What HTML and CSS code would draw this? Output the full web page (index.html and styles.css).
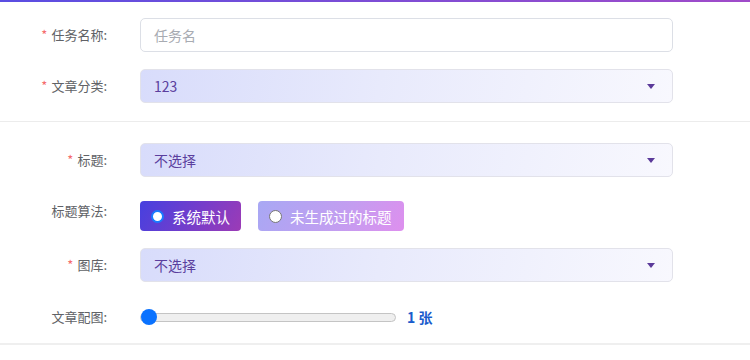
FILE: index.html
```html
<!DOCTYPE html>
<html lang="zh">
<head>
<meta charset="utf-8">
<link rel="stylesheet" href="styles.css">
</head>
<body>
<div class="topbar"></div>
<form class="form">
  <div class="section first">
    <div class="row">
      <label class="label"><span class="req">*</span>任务名称:</label>
      <div class="input"><span class="placeholder">任务名</span></div>
    </div>
    <div class="row">
      <label class="label"><span class="req">*</span>文章分类:</label>
      <div class="select"><span>123</span><i class="caret"></i></div>
    </div>
  </div>
  <div class="section second">
    <div class="row">
      <label class="label"><span class="req">*</span>标题:</label>
      <div class="select"><span>不选择</span><i class="caret"></i></div>
    </div>
    <div class="row row-radio">
      <label class="label top">标题算法:</label>
      <div class="radios">
        <div class="radio on"><span class="dot"></span>系统默认</div>
        <div class="radio off"><span class="dot"></span>未生成过的标题</div>
      </div>
    </div>
    <div class="row">
      <label class="label"><span class="req">*</span>图库:</label>
      <div class="select"><span>不选择</span><i class="caret"></i></div>
    </div>
    <div class="row row-slider">
      <label class="label">文章配图:</label>
      <div class="slider-wrap">
        <div class="track"><span class="thumb"></span></div>
        <span class="count">1 张</span>
      </div>
    </div>
  </div>
</form>
</body>
</html>
```
FILE: styles.css
```css
html, body {
  margin: 0;
  padding: 0;
  background: #fff;
  font-family: "Noto Sans CJK SC", "Noto Sans", sans-serif;
}
.topbar {
  height: 2px;
  background: linear-gradient(90deg, #5a4ee2, #a04bc9);
}
.form {
  margin: 0;
}
.section.first {
  padding-top: 16px;
  padding-bottom: 18px;
  border-bottom: 1px solid #ececec;
}
.section.second {
  padding-top: 21px;
  padding-bottom: 11px;
  border-bottom: 2px solid #efefef;
}
.row {
  display: flex;
  align-items: center;
  gap: 33px;
  margin-bottom: 17px;
}
.section.first .row:last-child { margin-bottom: 0; }
.row-radio { align-items: flex-start; margin-top: 24px; margin-bottom: 17px; }
.row-slider { margin-top: 20px; margin-bottom: 0; height: 30px; }
.label {
  width: 107px;
  flex: none;
  text-align: right;
  font-size: 13px;
  color: #606266;
  line-height: 20px;
}
.label.top { margin-top: 0; }
.req {
  color: #f56c6c;
  margin-right: 4px;
}
.input, .select {
  width: 533px;
  height: 34px;
  box-sizing: border-box;
  border: 1px solid #dcdfe6;
  border-radius: 5px;
  display: flex;
  align-items: center;
  padding: 0 14px 0 13px;
  font-size: 14px;
}
.input { background: #fff; }
.placeholder { color: #a8abb2; }
.select {
  background: linear-gradient(100deg, #d8dcfb 0%, #e8eafc 45%, #f8f8fe 100%);
  border-color: #e2e2ea;
  color: #5b3f9e;
  justify-content: space-between;
}
.caret {
  width: 0;
  height: 0;
  border-left: 4px solid transparent;
  border-right: 4px solid transparent;
  border-top: 5px solid #5b3a9a;
  margin-right: 3px;
}
.radios {
  display: flex;
  gap: 17px;
}
.radio {
  height: 30px;
  box-sizing: border-box;
  border-radius: 4px;
  display: flex;
  align-items: center;
  padding: 0 0 0 11px;
  font-size: 14.5px;
  color: #fff;
  white-space: nowrap;
  overflow: hidden;
}
.radio.on {
  width: 101px;
  background: linear-gradient(120deg, #4640df 0%, #7a3dc8 60%, #9c3bb6 100%);
}
.radio.off {
  width: 146px;
  background: linear-gradient(120deg, #a8a8f4 0%, #c49df0 60%, #de8fee 100%);
}
.dot {
  width: 13px;
  height: 13px;
  box-sizing: border-box;
  border-radius: 50%;
  background: #fff;
  margin-right: 8px;
  flex: none;
}
.radio.on .dot { border: 2px solid #1a7bff; }
.radio.off .dot { border: 1px solid #777; }
.slider-wrap {
  display: flex;
  align-items: center;
  gap: 11px;
}
.track {
  position: relative;
  width: 256px;
  height: 9px;
  box-sizing: border-box;
  border: 1px solid #c4c4c4;
  background: #efefef;
  border-radius: 5px;
}
.thumb {
  position: absolute;
  left: 0;
  top: 50%;
  width: 16px;
  height: 16px;
  margin-top: -8px;
  border-radius: 50%;
  background: #0a72ff;
}
.count {
  font-size: 14px;
  font-weight: bold;
  color: #1a5ccc;
}
```
